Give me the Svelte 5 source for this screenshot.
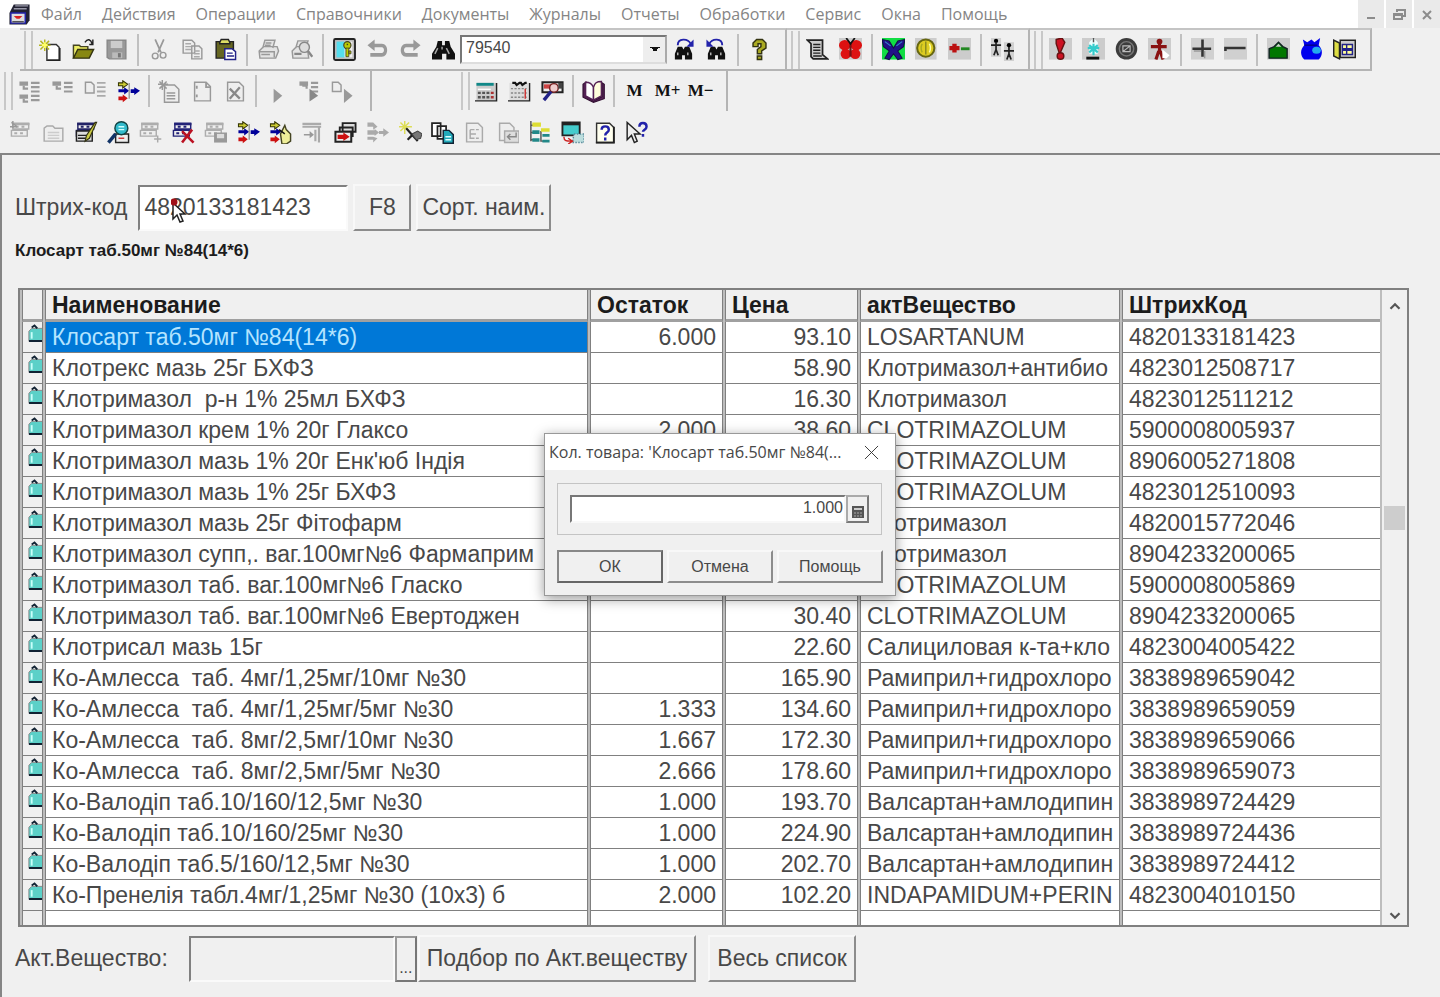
<script lang="ts">
	type Tool = { icon: string; label: string };

	const menu = [
		'Файл',
		'Действия',
		'Операции',
		'Справочники',
		'Документы',
		'Журналы',
		'Отчеты',
		'Обработки',
		'Сервис',
		'Окна',
		'Помощь'
	];

	const arrows =
		'<path d="M1 2h3V.5l3.500 2.500-3.500 2.500V4H1z" fill="#cc3" stroke="#330" stroke-width=".7"/><path d="M1 6.500h4V5l3.500 2.500L5 10V8.500H1z" fill="#009"/><path d="M1 11.500h3v-1.500l3.500 2.700L4 15.500V14H1z" fill="#c11"/>';
	const sheet = (c: string) =>
		`<path d="M2 1.500h11v4H2zM1 6.500h11v4H1z" fill="#eee" stroke="${c}"/><path d="M1.500 2.200h12M4 4h2M8 4h2M3 8.500h2M7 8.500h2" stroke="${c}" stroke-width="1.500"/>`;
	const binoculars =
		'<path d="M4 6h3l1 2 1-2h3l2 5v4H9v-3H7v3H2v-4z" fill="#111"/><path d="M4 10v2M11 10v2" stroke="#bbb"/>';

	// 16x16 toolbar glyphs
	const icons: Record<string, string> = {
		app: '<path d="M4 1h11v11l-2 3H1V7z" fill="#223"/><path d="M2 7h10v7H2z" fill="#ddd" stroke="#22a"/><path d="M5 2h9M4 4h9" stroke="#99a"/><path d="M4 9h6l-2 2H6z" fill="#d22"/><path d="M3 13h8" stroke="#555"/>',
		create:
			'<path d="M5.500 4.500H12l2 2v9H5.500z" fill="#fff" stroke="#333"/><path d="M14.500 7v8.500H6" fill="none" stroke="#222"/><path d="M4 1v8M0 5h8M1 2l6 6M7 2L1 8" stroke="#b5b520"/><path d="M4 3v4M2 5h4" stroke="#ff6" stroke-width="1.500"/>',
		open: '<path d="M1 14V5h4l1 1h5v3" fill="#ee6" stroke="#442"/><path d="M1 14l3-6h11l-3 6z" fill="#881" stroke="#331"/><path d="M9 3c2-3 4-2 5 1M14.500 1v3.500H12" fill="none" stroke="#222"/>',
		save: '<path d="M1.500 1.500h13v13H3l-1.500-1z" fill="#999" stroke="#888"/><path d="M4 2h8v5H4z" fill="#ccc"/><path d="M5 10h7v4H5z" fill="#bbb"/><path d="M9 10.500h2v3H9z" fill="#777"/>',
		cut: '<path d="M5 1l4 9M11 1L7 10" stroke="#999" fill="none" stroke-width="1.200"/><circle cx="5" cy="12.500" r="2" fill="none" stroke="#999"/><circle cx="10.500" cy="12" r="2" fill="none" stroke="#999"/>',
		copy: '<path d="M1.500 1.500h6l2 2v7h-8zM7.500 5.500h5l2 2v7h-7z" fill="#eee" stroke="#999"/><path d="M3 4h4M3 6h4M3 8h4M9 9h4M9 11h4M9 13h4" stroke="#aaa"/>',
		paste:
			'<path d="M1.500 2.500h12v11.500h-12z" fill="#662" stroke="#222"/><path d="M4 3l1-2h5l1 2v1H4z" fill="#dd6" stroke="#222"/><path d="M7.500 7.500h5l2.500 2v5.500H7.500z" fill="#fff" stroke="#228"/><path d="M9 10.500h4M9 12.500h5" stroke="#228"/>',
		print:
			'<path d="M4 7l1.500-5.500h7L11 7M1.500 9l3-3H14l1 3-2 5H2z" fill="#e4e4e4" stroke="#999"/><path d="M2 9.500h10v4M6 3.500h4M5.500 5h4M3 11.500h6" stroke="#999" fill="none"/>',
		preview:
			'<path d="M4 7l1.500-5h7L11 7M1.500 9l3-3H12l1 8H2z" fill="#e4e4e4" stroke="#999"/><circle cx="10" cy="6.500" r="3.500" fill="#ddd" stroke="#888"/><path d="M12.500 9l3 4M3 11h5" stroke="#888" stroke-width="1.600"/>',
		key: '<rect x=".7" y=".7" width="14.600" height="14.600" rx="1" fill="#bbb" stroke="#222" stroke-width="1.300"/><path d="M2.500 2.500h6v11h-6z" fill="#5de"/><path d="M8 2.500h5.500v11H8z" fill="#eee"/><circle cx="10" cy="5" r="2.500" fill="#bc0" stroke="#442" stroke-width=".8"/><path d="M9 7h2v6H9zM11 9h1.500v2H11z" fill="#bc0" stroke="#442" stroke-width=".6"/><path d="M9.500 4.500h1" stroke="#442"/>',
		undo: '<path d="M1 5l5-4v3h5c5 0 5 9 0 9H3v-2.500h8c2 0 2-4 0-4H6V9z" fill="#999"/>',
		redo: '<path d="M15 5l-5-4v3H5c-5 0-5 9 0 9h8v-2.500H5c-2 0-2-4 0-4h5V9z" fill="#999"/>',
		find: '<path d="M4 2h3v3h2V2h3l1 4 3 5v4h-6v-4H7v4H0v-4l3-5z" fill="#111"/><path d="M4 7l-2 4M10 7l2 4M7 6v2" stroke="#aaa"/>',
		findNext: binoculars + '<path d="M4 5c0-5 7-5 9-1" fill="none" stroke="#22a" stroke-width="1.300"/><path d="M15 1v5h-5z" fill="#22a"/>',
		findPrev: binoculars + '<path d="M12 5c0-5-7-5-9-1" fill="none" stroke="#22a" stroke-width="1.300"/><path d="M1 1v5h5z" fill="#22a"/>',
		help: '<path d="M3.500 6V3.500L6 1h4l2.500 2.500V7L9.500 9v2h-3V8L9 6V4H7v2zM6.500 12.500h3v2.500h-3z" fill="#aa2" stroke="#331"/>',
		scroll:
			'<path d="M1 1.500h10.500v10L15 14.500H5L3.500 13V4z" fill="#ccc" stroke="#222" stroke-width="1.200"/><path d="M5 4.500h5M5 6.500h5M5 8.500h5M5 10.500h5M5 12.500h6" stroke="#222"/>',
		moth: '<path d="M0 0h16v15H0z" fill="#ccc"/><ellipse cx="4" cy="5" rx="4" ry="3.600" fill="#d11"/><ellipse cx="12" cy="5" rx="4" ry="3.600" fill="#d11"/><circle cx="4.700" cy="11" r="3.600" fill="#d11"/><circle cx="11.300" cy="11" r="3.600" fill="#d11"/><path d="M8 3.500V13" stroke="#711" stroke-width="1.500"/><path d="M5 0l3 4 3-4" stroke="#111" stroke-width="1.200" fill="none"/>',
		butterfly:
			'<path d="M0 0h16v15H0z" fill="#1d4"/><path d="M0 1l5 1 3 5 3-5 5-1-1 5-4 3 3 5-3 1-3-4-3 4-3-1 3-5-4-3z" fill="#218" stroke="#114" stroke-width=".7"/><path d="M2 2.500l4 3M14 2.500l-4 3" stroke="#38c" stroke-width=".8"/>',
		coin: '<path d="M0 0h15v15H0z" fill="#ccc"/><circle cx="7.500" cy="7" r="6" fill="#dc2" stroke="#661" stroke-width="1.400"/><path d="M7.500 2.500v9" stroke="#882"/><path d="M10 4c1 2 1 4 0 6" stroke="#ffa" fill="none"/><path d="M5 4c-1 2-1 4 0 6" stroke="#aa2" fill="none"/>',
		plusMinus: '<path d="M0 0h16v15H0z" fill="#ccc"/><path d="M1 7h7M4.500 4v6" stroke="#b11" stroke-width="3"/><path d="M9 7.500h6" stroke="#282" stroke-width="2"/>',
		people:
			'<path d="M0 0h7v13H0zM9 3h7v13H9z" fill="#d0d0d0"/><circle cx="3.500" cy="2" r="1.500"/><path d="M0 5h7M3.500 3v5M3.500 8l-1.500 4M3.500 8L5 12M9 9h7M12.500 6v6M12.500 11l-1.500 4M12.500 11l1.500 4" stroke="#222" stroke-width="1.200"/><circle cx="12.500" cy="5" r="1.500"/>',
		alert: '<path d="M0 0h16v15H0z" fill="#ccc"/><path d="M5 1l4-1 2 3-3 7H7L5 4z" fill="#c12" stroke="#611"/><circle cx="8" cy="12.500" r="2.300" fill="#c12" stroke="#611"/>',
		fountain:
			'<path d="M0 0h16v15H0z" fill="#ccc"/><path d="M5 3l3-3 3 3v8H5z" fill="#eff"/><path d="M8 4v8M4 7h8M5 5l6 5M11 5l-6 5" stroke="#3cc" stroke-width="1.500"/><path d="M8 0v3" stroke="#555"/><path d="M3 14h9" stroke="#111" stroke-width="2"/>',
		disc: '<circle cx="8" cy="7.500" r="7.500" fill="#3c3c3c"/><circle cx="8" cy="7.500" r="5" fill="none" stroke="#777"/><path d="M5.500 5.500h5v4h-5zM5.500 9.500l5-4" fill="none" stroke="#bbb" stroke-width=".8"/>',
		man: '<path d="M0 0h16v15H0z" fill="#ccc"/><circle cx="8" cy="2.500" r="2" fill="#811"/><path d="M2 6h11M8 4v6M7.500 9l-2 6M8.500 9l2 6" stroke="#811" stroke-width="2.200"/><path d="M10 8l5 4-2 2h-3z" fill="#fff"/>',
		plus: '<path d="M0 0h16v15H0z" fill="#d0d0d0"/><path d="M1 7.500h13M8 1v12" stroke="#333" stroke-width="1.800"/><path d="M2 9h5M9.500 9v5" stroke="#999"/>',
		minus: '<path d="M0 0h16v15H0z" fill="#d0d0d0"/><path d="M1 9V7h14" fill="none" stroke="#333" stroke-width="1.800"/>',
		bag: '<path d="M0 0h16v15H0z" fill="#ccc"/><path d="M1.500 14V7.500L5 6l3-3 3 3 3 1.500V14z" fill="#070" stroke="#122"/><path d="M6 6l2-2 2 2z" fill="#ccc"/>',
		sack: '<path d="M3 5L2 1l3 2 3-2 2 2 4-3-1 5c3 3 3 7 0 10H3C0 12 0 8 3 5z" fill="#00e"/><ellipse cx="11.500" cy="8.500" rx="3" ry="2.500" fill="#2ae"/><path d="M3 5h9" stroke="#008"/>',
		door: '<path d="M5 1.500h10.500v12H5z" fill="#ccc" stroke="#222"/><path d="M.5 1.500l4 2v11l-4-2z" fill="#dd4" stroke="#222"/><path d="M6 4h8v8H6z" fill="#228"/><path d="M7 5h2v2H7zM10 5h3v2h-3zM7 9h2v2H7zM10 9h3v2h-3z" fill="#ff9"/>',
		tree: '<path d="M1 1h6v3H1zM1 10h6v3H1z" fill="#999"/><path d="M4 4v2h3M4 13v2h3M9 2h6M9 5h6M9 8h6M9 11h6M9 14h6" stroke="#999" stroke-width="1.500" fill="none"/>',
		treeTop: '<path d="M1 1h6v3H1z" fill="#999"/><path d="M4 4v2h3M9 2h6M9 5h6M9 8h6" stroke="#999" stroke-width="1.500" fill="none"/>',
		treeDoc: '<path d="M1 1.500h4l2 2V9H1z" fill="#eee" stroke="#999"/><path d="M9 2h6M9 5h6M9 8h6M9 11h6" stroke="#aaa" stroke-width="1.300"/>',
		flow: arrows + '<path d="M8.500 2v11" stroke="#999"/><path d="M9.500 6.500H12V5l4 2.500-4 3V9H9.500z" fill="#009"/>',
		docNew: '<path d="M4.500 3.500h7l3 3v9h-10z" fill="#eee" stroke="#999"/><path d="M6 9h6M6 11h6M6 13h6M3 0v7M0 3h7M1 1l5 5M6 1L1 6" stroke="#999"/>',
		docMarks: '<path d="M2.500 1.500h8l3 3v10h-11z" fill="#eee" stroke="#999"/><path d="M4 4v2M4 10v2M10.500 2v3h3" fill="none" stroke="#999" stroke-width="1.300"/>',
		docDelete: '<path d="M2.500 1.500h8l3 3v10h-11z" fill="#eee" stroke="#999"/><path d="M4 6l7 7M11 5l-7 8" stroke="#888" stroke-width="1.600"/>',
		play: '<path d="M6 6l6 5-6 5z" fill="#999"/>',
		playTree: '<path d="M1 1h6v3H1z" fill="#999"/><path d="M3 4h3v2M9 2h5M9 5h5M9 8h5" stroke="#999" stroke-width="1.500" fill="none"/><path d="M8 6l6 5-6 4z" fill="#888"/>',
		playDoc: '<path d="M1 1.500h4l2 2V8H1z" fill="#eee" stroke="#999"/><path d="M9 6l6 5-6 5z" fill="#999"/>',
		calc: '<path d="M1 2h14v12H1z" fill="#ccc"/><path d="M1 3h12" stroke="#188" stroke-width="2"/><path d="M2 6.500h9" stroke="#fff"/><path d="M2 9h2m1 0h2m1 0h2M2 12h2m1 0h2m1 0h2" stroke="#555" stroke-width="1.600"/><path d="M11 9h2M11 12h2" stroke="#a33" stroke-width="1.600"/><path d="M15 2v12.500H0" fill="none" stroke="#222"/>',
		calendar: '<path d="M1 2h13v12H1z" fill="#ddd"/><path d="M2 6h11M2 9h11M2 12h11" stroke="#888" stroke-dasharray="1.500 1"/><path d="M3 2h2l1 1.500L8 2h1l1 1.500L12 2h1" stroke="#111" fill="none" stroke-width="1.500"/><path d="M12 6v7" stroke="#c33"/><path d="M15 2v12.500H0" fill="none" stroke="#222"/>',
		tableFind: '<path d="M1 1.500h14v7H1z" fill="#eee" stroke="#222" stroke-width="1.400"/><path d="M2 3h5v3H2z" fill="#c44"/><circle cx="9" cy="5.500" r="3" fill="#ecc" stroke="#722"/><path d="M12 2h3v4h-3z" fill="#444"/><path d="M7 8l-5 6" stroke="#228" stroke-width="2.400"/>',
		book: '<path d="M.7 3l2-1.500V11L8 14.500l6-3V2l1.500 1v10L8 15.500.7 12z" fill="#525" stroke="#313" stroke-width=".8"/><path d="M2.500 1.500c3 0 4 1 5.500 3.500v9L2.500 11z" fill="#fff" stroke="#525"/><path d="M8 5c1-3 2-4 5.500-4v10L8 14z" fill="#ffd" stroke="#525"/>',
		listNew: '<g opacity=".55">' + sheet('#777') + '</g><path d="M1 1l4 3M0 4h5M2 0v5" stroke="#999"/>',
		folder: '<path d="M1.500 14V5l2-1.500h4L9 5h5.500v9z" fill="#eee" stroke="#aaa"/><path d="M4 8h8M4 10h8M4 12h8" stroke="#ccc"/>',
		listEdit: sheet('#226') + '<path d="M1 7h11v7H1z" fill="#ddd" stroke="#222"/><path d="M2 10h8M2 12h8" stroke="#222"/><path d="M14 1l-6 9-1 4 3-2 5-11z" fill="#cc4" stroke="#331" stroke-width=".8"/>',
		listFind: '<path d="M6 9h9v6H6z" fill="#eee" stroke="#222"/><path d="M8 12h4" stroke="#c33"/><circle cx="10" cy="5" r="4.500" fill="#3bc" stroke="#144"/><path d="M8 4h4M8 6h4" stroke="#cff"/><path d="M6 9l-5 6" stroke="#136" stroke-width="2.400"/>',
		listAdd: '<g opacity=".55">' + sheet('#777') + '</g><path d="M13 10v5M10.500 12.500h5" stroke="#aaa"/>',
		listDelete: sheet('#227') + '<path d="M7 7l8 8M14 6L7 15" stroke="#b12" stroke-width="1.800"/>',
		listSave: '<g opacity=".55">' + sheet('#777') + '</g><path d="M7 8h9v7H7z" fill="#999"/><path d="M9 9h5v3H9z" fill="#ddd"/>',
		flowHand: arrows + '<path d="M8 9l3-6 1 3 3 3v5l-3 2H9z" fill="#ee9" stroke="#442"/><path d="M7 6l4 3" stroke="#111"/>',
		treeRight: '<path d="M1 2h13M1 4h13M12.500 4v11M10 6v8" stroke="#aaa" stroke-width="1.500"/><path d="M2 9h4V7l3 2.500L6 12v-2H2z" fill="#999"/>',
		stack: '<path d="M6 1.500h9v6H6zM4 4.500h9v6H4z" fill="#ddd" stroke="#222" stroke-width="1.300"/><path d="M1 7.500h11v7H1z" fill="#eee" stroke="#222" stroke-width="1.400"/><path d="M3 10h4V9l3 2-3 2v-1H3z" fill="#c11" stroke="#c11"/>',
		merge: '<path d="M1 1h4l3 3-3 2V4H1zM1 6.500h5v-1L9 8l-3 2.500v-1H1zM1 11h4l3 1-3 3v-2H1zM9 7h3V5l4 3-4 3V9H9z" fill="#aaa"/>',
		wizard: '<path d="M4 0v9M0 4h9M1 1l6 6M7 1L1 7" stroke="#dd5"/><path d="M5 5l8 9M9 10l-3 3" stroke="#222" stroke-width="1.500"/><path d="M9 9l4-2 3 2-1 3-3 1z" fill="#777" stroke="#444" stroke-width=".7"/>',
		docs: '<path d="M.7 1.500h6v9h-6zM4.500 3.500h6v9h-6z" fill="#fff" stroke="#222" stroke-width="1.200"/><path d="M8.500 6.500h4l3 3v6h-7z" fill="#2ab" stroke="#123"/><path d="M10 11h4M10 13h4" stroke="#dff"/>',
		docTree: '<path d="M2.500 1.500h8l3 3v10h-11z" fill="#eee" stroke="#aaa"/><path d="M5 6h3M5 6v6h3M5 9h4M9 6h2M9 12h2" fill="none" stroke="#aaa"/>',
		docBack: '<path d="M2.500 1.500h7l3 3v9h-10z" fill="#eee" stroke="#aaa"/><path d="M6 7h10v8H6z" fill="#ddd" stroke="#aaa"/><path d="M14 8v3H8M10 9l-2 2 2 2" fill="none" stroke="#888"/>',
		nodes: '<path d="M2 0v14M2 3h3M2 8h3M2 13h5M9 7v7h3" stroke="#555" fill="none"/><path d="M3 1h6v3H3zM9 5h6v2.500H9z" fill="#dd3"/><path d="M3 6.500h5V9H3zM3 12h5v2.500H3zM10 9h5v2h-5zM10 13h5v2h-5z" fill="#288"/>',
		monitor: '<path d="M1 1h12v9H1z" fill="#4cc" stroke="#222" stroke-width="1.300"/><path d="M1 2h12" stroke="#222" stroke-width="2"/><path d="M9 9h7v6H8z" fill="#bdd" stroke="#589" stroke-dasharray="1 1"/><path d="M2 11c0 3 2 3 5 3M5 12l3 2-3 2" stroke="#c22" fill="none"/>',
		docHelp: '<path d="M2.500 1.500h9l3 3v10.500h-12z" fill="#ffe" stroke="#333"/><path d="M14.500 4v11H2" stroke="#222" fill="none" stroke-width="1.300"/><path d="M6 6c0-3 5-3 5 0 0 2-2.500 2-2.500 4M8.500 11.500v2" stroke="#22a" fill="none" stroke-width="1.700"/>',
		cursorHelp: '<path d="M1.500 1v12l3-3 2 5 2-1-2-5h4z" fill="#eee" stroke="#222"/><path d="M10 4c0-3.500 5-3.500 5 0 0 2-2.500 2-2.500 3.500M12.500 9v2" stroke="#22a" fill="none" stroke-width="1.700"/>'
	};

	const t = (icon: string, label: string): Tool => ({ icon, label });

	const editGroups = [
		[t('create', 'Новый'), t('open', 'Открыть'), t('save', 'Сохранить')],
		[t('cut', 'Вырезать'), t('copy', 'Копировать'), t('paste', 'Вставить')],
		[t('print', 'Печать'), t('preview', 'Просмотр')],
		[t('key', 'Свойства'), t('undo', 'Отменить'), t('redo', 'Вернуть'), t('find', 'Найти')]
	];
	const searchGroups = [[t('findNext', 'Найти далее'), t('findPrev', 'Найти ранее')], [t('help', 'Справка')]];
	const shopGroups = [
		[t('scroll', 'Отчет'), t('moth', 'Красная бабочка')],
		[t('butterfly', 'Бабочка'), t('coin', 'Деньги'), t('plusMinus', 'Приход-расход')],
		[t('people', 'Клиенты')]
	];
	const stockGroups = [
		[t('alert', 'Важно'), t('fountain', 'Фонтан'), t('disc', 'Диск'), t('man', 'Сотрудник')],
		[t('plus', 'Добавить'), t('minus', 'Убрать')],
		[t('bag', 'Сумка'), t('sack', 'Мешок'), t('door', 'Выход')]
	];
	const treeGroups = [
		[t('tree', 'Дерево'), t('treeTop', 'Уровень'), t('treeDoc', 'Строки'), t('flow', 'Ввод на основании')],
		[t('docNew', 'Новая строка'), t('docMarks', 'Отметить'), t('docDelete', 'Удалить строку')],
		[t('play', 'Провести'), t('playTree', 'Провести группу'), t('playDoc', 'Провести документ')]
	];
	const calcGroups = [
		[t('calc', 'Калькулятор'), t('calendar', 'Календарь'), t('tableFind', 'Табло')],
		[t('book', 'Описание')]
	];
	const listTools = [
		t('listNew', 'Новый элемент'),
		t('folder', 'Новая группа'),
		t('listEdit', 'Изменить'),
		t('listFind', 'Просмотреть'),
		t('listAdd', 'Скопировать'),
		t('listDelete', 'Удалить'),
		t('listSave', 'Записать'),
		t('flow', 'Подчинение'),
		t('flowHand', 'Выбрать'),
		t('treeRight', 'Перенести'),
		t('stack', 'Журнал'),
		t('merge', 'Объединить'),
		t('wizard', 'Мастер'),
		t('docs', 'Копии'),
		t('docTree', 'Структура'),
		t('docBack', 'Возврат'),
		t('nodes', 'Иерархия'),
		t('monitor', 'Экран'),
		t('docHelp', 'Описание формы'),
		t('cursorHelp', 'Что это')
	];

	const rows = [
		['Клосарт таб.50мг №84(14*6)', '6.000', '93.10', 'LOSARTANUM', '4820133181423'],
		['Клотрекс мазь 25г БХФЗ', '', '58.90', 'Клотримазол+антибио', '4823012508717'],
		['Клотримазол  р-н 1% 25мл БХФЗ', '', '16.30', 'Клотримазол', '4823012511212'],
		['Клотримазол крем 1% 20г Глаксо', '2.000', '38.60', 'CLOTRIMAZOLUM', '5900008005937'],
		["Клотримазол мазь 1% 20г Енк'юб Індія", '', '', 'CLOTRIMAZOLUM', '8906005271808'],
		['Клотримазол мазь 1% 25г БХФЗ', '', '', 'CLOTRIMAZOLUM', '4823012510093'],
		['Клотримазол мазь 25г Фітофарм', '', '', 'Клотримазол', '4820015772046'],
		['Клотримазол супп,. ваг.100мг№6 Фармаприм', '', '', 'Клотримазол', '8904233200065'],
		['Клотримазол таб. ваг.100мг№6 Гласко', '', '', 'CLOTRIMAZOLUM', '5900008005869'],
		['Клотримазол таб. ваг.100мг№6 Евертоджен', '', '30.40', 'CLOTRIMAZOLUM', '8904233200065'],
		['Клотрисал мазь 15г', '', '22.60', 'Салициловая к-та+кло', '4823004005422'],
		['Ко-Амлесса  таб. 4мг/1,25мг/10мг №30', '', '165.90', 'Рамиприл+гидрохлоро', '3838989659042'],
		['Ко-Амлесса  таб. 4мг/1,25мг/5мг №30', '1.333', '134.60', 'Рамиприл+гидрохлоро', '3838989659059'],
		['Ко-Амлесса  таб. 8мг/2,5мг/10мг №30', '1.667', '172.30', 'Рамиприл+гидрохлоро', '3838989659066'],
		['Ко-Амлесса  таб. 8мг/2,5мг/5мг №30', '2.666', '178.60', 'Рамиприл+гидрохлоро', '3838989659073'],
		['Ко-Валодіп таб.10/160/12,5мг №30', '1.000', '193.70', 'Валсартан+амлодипин', '3838989724429'],
		['Ко-Валодіп таб.10/160/25мг №30', '1.000', '224.90', 'Валсартан+амлодипин', '3838989724436'],
		['Ко-Валодіп таб.5/160/12,5мг №30', '1.000', '202.70', 'Валсартан+амлодипин', '3838989724412'],
		['Ко-Пренелія табл.4мг/1,25мг №30 (10х3) б', '2.000', '102.20', 'INDAPAMIDUM+PERIN', '4823004010150']
	];

	let selected = $state(0);
	let barcode = $state('4820133181423');
	let substance = $state('');
	let quantity = $state('1.000');
</script>

{#snippet glyph(name: string)}
	<svg class="glyph" viewBox="0 0 16 16" aria-hidden="true">{@html icons[name]}</svg>
{/snippet}

{#snippet groups(list: Tool[][])}
	{#each list as group, i}
		{#if i > 0}<span class="sep"></span>{/if}
		{#each group as tool}
			<button class="tool" aria-label={tool.label}>{@render glyph(tool.icon)}</button>
		{/each}
	{/each}
{/snippet}

<div class="app">
	<header class="menubar">
		{@render glyph('app')}
		<nav>
			{#each menu as item}
				<a href="#menu">{item}</a>
			{/each}
		</nav>
		<div class="window-buttons">
			<button aria-label="Свернуть"><svg viewBox="0 0 16 16"><path d="M4 12h8" /></svg></button>
			<button aria-label="Восстановить"><svg viewBox="0 0 16 16"><path d="M6 6V4h8v6h-3M3 8h8v5H3zM3 9h8" /></svg></button>
			<button aria-label="Закрыть"><svg viewBox="0 0 16 16"><path d="M4 5l8 8M12 5l-8 8" /></svg></button>
		</div>
	</header>

	<div class="bars main-bars">
		<div class="bar">
			<span class="grip"></span>
			{@render groups(editGroups)}
			<select class="search" aria-label="Поиск">
				<option>79540</option>
			</select>
			{@render groups(searchGroups)}
		</div>
		<div class="bar">
			<span class="grip"></span>
			{@render groups(shopGroups)}
		</div>
		<div class="bar">
			<span class="grip"></span>
			{@render groups(stockGroups)}
		</div>
	</div>

	<div class="bars second-bars">
		<div class="bar tree-bar">
			<span class="grip"></span>
			{@render groups(treeGroups)}
		</div>
		<div class="bar calc-bar">
			<span class="grip"></span>
			{@render groups(calcGroups)}
			<span class="sep"></span>
			<button class="tool memory">M</button>
			<button class="tool memory">M+</button>
			<button class="tool memory">M−</button>
		</div>
	</div>

	<div class="list-bar">
		{#each listTools as tool}
			<button class="tool" aria-label={tool.label}>{@render glyph(tool.icon)}</button>
		{/each}
	</div>

	<main>
		<div class="form-row">
			<label for="barcode">Штрих-код</label>
			<div class="barcode">
				<input id="barcode" class="field" bind:value={barcode} />
				<svg class="pointer" viewBox="0 0 16 26" aria-hidden="true">
					<path d="M2 5v16l4-4 3 7 3-1-3-7h5z" fill="#fff" stroke="#222" stroke-width="1.500" />
					<circle cx="3" cy="4" r="3.500" fill="#a01018" />
				</svg>
			</div>
			<button class="push f8">F8</button>
			<button class="push">Сорт. наим.</button>
		</div>
		<p class="current">{rows[selected][0]}</p>

		<div class="frame">
			<table>
				<colgroup>
					<col class="c-mark" />
					<col />
					<col class="c-num" />
					<col class="c-num" />
					<col class="c-wide" />
					<col class="c-code" />
				</colgroup>
				<thead>
					<tr>
						<th></th>
						<th>Наименование</th>
						<th>Остаток</th>
						<th>Цена</th>
						<th>актВещество</th>
						<th>ШтрихКод</th>
					</tr>
				</thead>
				<tbody>
					{#each rows as row, i}
						<tr onclick={() => (selected = i)}>
							<td class="mark">
								<svg viewBox="0 0 16 22" aria-hidden="true">
									<path d="M2 8l3-3h11v13H2z" fill="#5cd0c8" />
									<path d="M2 18V8l3-3h11" fill="none" stroke="#888" />
									<path d="M5 4l3-2 3 3M2 18.500h14" fill="none" stroke="#123" stroke-width="2" />
									<path d="M5 9v7" stroke="#c8fffa" stroke-width="2" />
								</svg>
							</td>
							<td class:selected={i === selected}>{row[0]}</td>
							<td class="num">{row[1]}</td>
							<td class="num">{row[2]}</td>
							<td>{row[3]}</td>
							<td>{row[4]}</td>
						</tr>
					{/each}
					<tr class="rest">
						<td class="mark"></td>
						<td></td>
						<td></td>
						<td></td>
						<td></td>
						<td></td>
					</tr>
				</tbody>
			</table>
			<div class="scrollbar">
				<button aria-label="Вверх"><svg viewBox="0 0 12 8"><path d="M2 6l4-4 4 4" /></svg></button>
				<span class="above"></span>
				<span class="thumb"></span>
				<span class="below"></span>
				<button aria-label="Вниз"><svg viewBox="0 0 12 8"><path d="M2 2l4 4 4-4" /></svg></button>
			</div>
		</div>

		<div class="form-row footer">
			<label for="substance">Акт.Вещество:</label>
			<div class="picker">
				<input id="substance" class="field" bind:value={substance} />
				<button class="dots" aria-label="Выбрать вещество">...</button>
			</div>
			<button class="push">Подбор по Акт.веществу</button>
			<button class="push all">Весь список</button>
		</div>

		<div class="dialog" role="dialog" aria-labelledby="dialog-title">
			<div class="title">
				<span id="dialog-title">Кол. товара: 'Клосарт таб.50мг №84(...</span>
				<button aria-label="Закрыть окно"><svg viewBox="0 0 16 16"><path d="M1 1l14 14M15 1L1 15" /></svg></button>
			</div>
			<div class="group">
				<input aria-label="Количество" bind:value={quantity} />
				<button class="calc" aria-label="Калькулятор">
					<svg viewBox="0 0 14 14"><path d="M1 1h12v12H1z" fill="#555" /><path d="M3 3h8v2H3z" fill="#ccc" /><path d="M3 8h8M3 11h8" stroke="#aaa" stroke-dasharray="2 1" /></svg>
				</button>
			</div>
			<div class="actions">
				<button class="default">ОК</button>
				<button>Отмена</button>
				<button>Помощь</button>
			</div>
		</div>
	</main>
</div>

<style>
	:global(body) {
		background: #f0f0f0;
	}

	.app {
		display: flex;
		flex-direction: column;
		min-height: 100vh;
		font-family: 'Liberation Sans', Arial, sans-serif;
		font-size: 23px;
		color: #484848;
		background: #f0f0f0;
	}

	.app,
	.app :global(*) {
		box-sizing: border-box;
	}

	button,
	input,
	select {
		font: inherit;
		color: inherit;
		margin: 0;
		border-radius: 0;
		outline: none;
	}

	button {
		padding: 0;
		border: 0;
		background: none;
		white-space: nowrap;
	}

	.glyph {
		display: block;
		width: 23px;
		height: 23px;
	}

	/* menu */
	.menubar {
		display: flex;
		align-items: center;
		height: 28px;
		padding-left: 8px;
		background: #fff;
	}

	nav {
		display: flex;
		gap: 20px;
		margin-left: 10px;
		font-family: 'Open Sans', 'Noto Sans', sans-serif;
		font-size: 16px;
	}

	nav a {
		color: #858585;
		text-decoration: none;
	}

	.window-buttons {
		display: flex;
		gap: 2px;
		margin-left: auto;
	}

	.window-buttons button {
		width: 26px;
		height: 28px;
		background: #eaeaea;
	}

	.window-buttons svg {
		width: 16px;
		height: 16px;
		fill: none;
		stroke: #8c8c8c;
		stroke-width: 2;
	}

	/* toolbars */
	.bars {
		display: flex;
	}

	.bar {
		display: flex;
		align-items: center;
		height: 43px;
		border: 1px solid #b4b4b4;
		border-width: 2px 2px 2px 0;
		border-top-color: #c4c4c4;
	}

	.main-bars {
		padding-left: 20px;
	}

	.main-bars .bar {
		padding-right: 9px;
	}

	.second-bars .bar {
		height: 40px;
		border-width: 0 2px 0 0;
	}

	.second-bars .grip {
		margin-right: 0;
	}

	.second-bars .sep {
		margin: 0 3px;
	}

	.tree-bar {
		width: 372px;
		margin-right: 85px;
	}

	.calc-bar {
		padding-right: 9px;
	}

	.grip {
		width: 9px;
		height: 38px;
		margin: 0 1px 0 4px;
		border: 2px solid #c8c8c8;
		border-width: 0 2px;
	}

	.sep {
		width: 2px;
		height: 32px;
		margin: 0 4px;
		background: #c0c0c0;
	}

	.tool {
		display: flex;
		flex: none;
		align-items: center;
		justify-content: center;
		width: 33px;
		height: 34px;
	}

	.memory {
		font-family: 'Liberation Serif', serif;
		font-size: 17px;
		font-weight: bold;
		color: #111;
	}

	.search {
		appearance: none;
		width: 207px;
		height: 29px;
		padding: 0 4px 4px;
		border: 2px solid;
		border-color: #777 #aaa #ddd #777;
		font-size: 16px;
		background:
			linear-gradient(to top right, transparent 50%, #111 0) right 10px top 10px / 5px 5px no-repeat,
			linear-gradient(to top left, transparent 50%, #111 0) right 5px top 10px / 5px 5px no-repeat,
			linear-gradient(#eee, #eee) right / 22px 100% no-repeat,
			#fff;
	}

	.list-bar {
		display: flex;
		width: 653px;
		height: 42px;
		padding-left: 5px;
	}

	.list-bar .tool {
		flex: 1;
		height: 42px;
	}

	/* work area */
	main {
		position: relative;
		flex: 1;
		padding: 29px 31px 13px 13px;
		border-top: 2px solid #858585;
		border-left: 2px solid #858585;
	}

	.form-row {
		display: flex;
		align-items: center;
		height: 47px;
	}

	.barcode {
		position: relative;
		width: 210px;
		margin: 0 5px 0 11px;
	}

	.field {
		display: block;
		width: 100%;
		height: 46px;
		padding: 0 4px;
		border: 2px solid;
		border-color: #808080 #fafafa #fafafa #808080;
		background: #fff;
	}

	.pointer {
		position: absolute;
		top: 13px;
		left: 33px;
		width: 16px;
		height: 26px;
	}

	.push {
		height: 47px;
		padding: 0 4px;
		border: 2px solid;
		border-color: #f8f8f8 #8c8c8c #8c8c8c #f8f8f8;
	}

	.f8 {
		width: 58px;
		margin-right: 5px;
	}

	.current {
		margin: 9px 0 27px;
		font-size: 17px;
		line-height: 21px;
		font-weight: bold;
		color: #1c1c1c;
	}

	.frame {
		display: flex;
		margin: 0 0 0 3px;
		border: 2px solid #808080;
	}

	table {
		flex: 1;
		width: 0;
		table-layout: fixed;
		border-collapse: separate;
		border-spacing: 2px 0;
		background: #bdbdbd;
	}

	.c-mark {
		width: 21px;
	}

	.c-num {
		width: 133px;
	}

	.c-wide {
		width: 260px;
	}

	.c-code {
		width: 258px;
	}

	th,
	td {
		height: 31px;
		padding: 0 6px;
		border: 1px solid #808080;
		border-width: 0 1px 1px;
		line-height: 28px;
		text-align: left;
		white-space: pre;
		overflow: hidden;
		background: #fff;
	}

	th {
		height: 32px;
		border-bottom: 3px solid #a0a0a0;
		color: #1c1c1c;
		background: #f0f0f0;
	}

	th:last-child,
	td:last-child {
		border-right: 0;
	}

	.num {
		text-align: right;
	}

	.mark {
		padding: 0;
		background: #f0f0f0;
	}

	.mark svg {
		display: block;
		width: 15px;
		height: 22px;
		margin: 0 0 6px 4px;
	}

	.selected {
		color: #b4e4ff;
		background: #0078d7;
	}

	.rest td {
		height: 14px;
		border-bottom: 0;
	}

	.scrollbar {
		display: flex;
		flex-direction: column;
		align-items: center;
		width: 25px;
	}

	.scrollbar button {
		height: 26px;
	}

	.scrollbar svg {
		width: 14px;
		height: 9px;
		fill: none;
		stroke: #555;
		stroke-width: 2;
	}

	.above {
		flex: 34;
	}

	.thumb {
		width: 21px;
		height: 24px;
		background: #cdcdcd;
	}

	.below {
		flex: 66;
	}

	.footer {
		margin-top: 8px;
	}

	.footer .push {
		padding: 0 7px;
	}

	.picker {
		display: flex;
		width: 228px;
		margin: 0 1px 0 21px;
	}

	.picker .field {
		flex: 1;
		width: 0;
		background: #f0f0f0;
	}

	.dots {
		width: 22px;
		padding-top: 18px;
		border: 2px solid;
		border-color: #999 #777 #777 #999;
		font-size: 16px;
	}

	.footer .all {
		margin-left: 12px;
	}

	/* quantity dialog */
	.dialog {
		position: absolute;
		top: 278px;
		left: 50%;
		width: 352px;
		margin-left: -177px;
		border: 1px solid #999;
		font-size: 16px;
		background: #f0f0f0;
		box-shadow: 0 3px 12px rgba(0, 0, 0, 0.4);
	}

	.title {
		display: flex;
		align-items: center;
		justify-content: space-between;
		height: 36px;
		padding: 0 16px 0 4px;
		font-family: 'Open Sans', 'Noto Sans', sans-serif;
		white-space: nowrap;
		background: #fff;
	}

	.title svg {
		display: block;
		width: 15px;
		height: 15px;
		fill: none;
		stroke: #333;
	}

	.group {
		display: flex;
		margin: 13px 13px 15px 12px;
		padding: 11px 12px;
		border: 1px solid #c4c4c4;
	}

	.group input {
		flex: 1;
		width: 0;
		height: 28px;
		padding: 0 1px 3px;
		border: 2px solid;
		border-color: #777 #f8f8f8 #f8f8f8 #777;
		text-align: right;
		background: #fff;
	}

	.calc {
		width: 23px;
		height: 28px;
		border: 2px solid;
		border-color: #aaa #777 #777 #aaa;
	}

	.calc svg {
		display: block;
		width: 14px;
		height: 14px;
		margin: 6px auto 0;
	}

	.actions {
		display: flex;
		gap: 4px;
		padding: 0 12px 12px;
	}

	.actions button {
		flex: 1;
		height: 33px;
		border: 2px solid;
		border-color: #f8f8f8 #8c8c8c #8c8c8c #f8f8f8;
	}

	.actions .default {
		border-color: #888 #666 #666 #888;
	}
</style>
